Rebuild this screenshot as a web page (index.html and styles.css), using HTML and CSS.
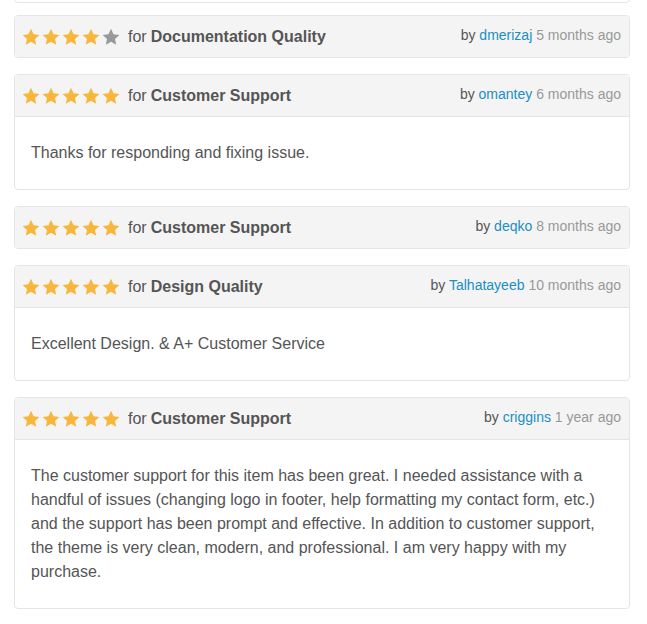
FILE: index.html
```html
<html>
<head>
    <link rel="stylesheet" href="styles.css">
    <title>Reviews</title>
</head>
<body>
    <svg width="0" height="0" class="defs">
        <defs>
            <path id="star" d="M9 0.8l2.5 5.4 5.9 0.7-4.4 4 1.2 5.8L9 13.8l-5.2 2.9 1.2-5.8-4.4-4 5.9-0.7z"/>
        </defs>
    </svg>
    <div class="reviews">
        <div class="review review-prev"></div>

        <div class="review">
            <div class="review-header">
                <div class="rating">
                    <span class="stars">
                        <svg class="star on" viewBox="0 0 18 18"><use href="#star"/></svg>
                        <svg class="star on" viewBox="0 0 18 18"><use href="#star"/></svg>
                        <svg class="star on" viewBox="0 0 18 18"><use href="#star"/></svg>
                        <svg class="star on" viewBox="0 0 18 18"><use href="#star"/></svg>
                        <svg class="star off" viewBox="0 0 18 18"><use href="#star"/></svg>
                    </span>
                    for <strong>Documentation Quality</strong>
                </div>
                <div class="meta">by <a href="#">dmerizaj</a> <span class="time">5 months ago</span></div>
            </div>
        </div>

        <div class="review">
            <div class="review-header">
                <div class="rating">
                    <span class="stars">
                        <svg class="star on" viewBox="0 0 18 18"><use href="#star"/></svg>
                        <svg class="star on" viewBox="0 0 18 18"><use href="#star"/></svg>
                        <svg class="star on" viewBox="0 0 18 18"><use href="#star"/></svg>
                        <svg class="star on" viewBox="0 0 18 18"><use href="#star"/></svg>
                        <svg class="star on" viewBox="0 0 18 18"><use href="#star"/></svg>
                    </span>
                    for <strong>Customer Support</strong>
                </div>
                <div class="meta">by <a href="#">omantey</a> <span class="time">6 months ago</span></div>
            </div>
            <div class="review-body">Thanks for responding and fixing issue.</div>
        </div>

        <div class="review">
            <div class="review-header">
                <div class="rating">
                    <span class="stars">
                        <svg class="star on" viewBox="0 0 18 18"><use href="#star"/></svg>
                        <svg class="star on" viewBox="0 0 18 18"><use href="#star"/></svg>
                        <svg class="star on" viewBox="0 0 18 18"><use href="#star"/></svg>
                        <svg class="star on" viewBox="0 0 18 18"><use href="#star"/></svg>
                        <svg class="star on" viewBox="0 0 18 18"><use href="#star"/></svg>
                    </span>
                    for <strong>Customer Support</strong>
                </div>
                <div class="meta">by <a href="#">deqko</a> <span class="time">8 months ago</span></div>
            </div>
        </div>

        <div class="review">
            <div class="review-header">
                <div class="rating">
                    <span class="stars">
                        <svg class="star on" viewBox="0 0 18 18"><use href="#star"/></svg>
                        <svg class="star on" viewBox="0 0 18 18"><use href="#star"/></svg>
                        <svg class="star on" viewBox="0 0 18 18"><use href="#star"/></svg>
                        <svg class="star on" viewBox="0 0 18 18"><use href="#star"/></svg>
                        <svg class="star on" viewBox="0 0 18 18"><use href="#star"/></svg>
                    </span>
                    for <strong>Design Quality</strong>
                </div>
                <div class="meta">by <a href="#">Talhatayeeb</a> <span class="time">10 months ago</span></div>
            </div>
            <div class="review-body">Excellent Design. &amp; A+ Customer Service</div>
        </div>

        <div class="review">
            <div class="review-header">
                <div class="rating">
                    <span class="stars">
                        <svg class="star on" viewBox="0 0 18 18"><use href="#star"/></svg>
                        <svg class="star on" viewBox="0 0 18 18"><use href="#star"/></svg>
                        <svg class="star on" viewBox="0 0 18 18"><use href="#star"/></svg>
                        <svg class="star on" viewBox="0 0 18 18"><use href="#star"/></svg>
                        <svg class="star on" viewBox="0 0 18 18"><use href="#star"/></svg>
                    </span>
                    for <strong>Customer Support</strong>
                </div>
                <div class="meta">by <a href="#">criggins</a> <span class="time">1 year ago</span></div>
            </div>
            <div class="review-body">The customer support for this item has been great. I needed assistance with a handful of issues (changing logo in footer, help formatting my contact form, etc.) and the support has been prompt and effective. In addition to customer support, the theme is very clean, modern, and professional. I am very happy with my purchase.</div>
        </div>
    </div>
</body>
</html>
```

FILE: styles.css
```css
body {
    margin: 0;
    font-family: "Liberation Sans", Arial, sans-serif;
    color: #555;
    background: #fff;
}

.defs {
    position: absolute;
}

.reviews {
    display: flex;
    flex-direction: column;
    gap: 16px;
    width: 616px;
    margin: -15px 0 0 14px;
}

.review {
    border: 1px solid #e2e6ea;
    border-radius: 4px;
    overflow: hidden;
}

.review-prev {
    height: 16px;
    margin-bottom: -4px;
}

.review-header {
    display: flex;
    justify-content: space-between;
    align-items: center;
    height: 41px;
    padding: 0 8px 0 7px;
    background-color: #f4f4f4;
}

.review-header + .review-body {
    border-top: 1px solid #e2e6ea;
}

.rating {
    display: flex;
    align-items: center;
    font-size: 16px;
    color: #555;
}

.rating strong {
    margin-left: 4px;
}

.stars {
    display: flex;
    gap: 2px;
    margin-right: 8px;
}

.star {
    width: 18px;
    height: 18px;
}

.star.on {
    fill: #f8b63a;
}

.star.off {
    fill: #999;
}

.meta {
    font-size: 14px;
    margin-top: -3px;
    color: #555;
}

.meta a {
    color: #1b8ec3;
    text-decoration: none;
}

.time {
    color: #999;
}

.review-body {
    padding: 24px 16px;
    font-size: 16px;
    line-height: 24px;
    color: #555;
}
```
